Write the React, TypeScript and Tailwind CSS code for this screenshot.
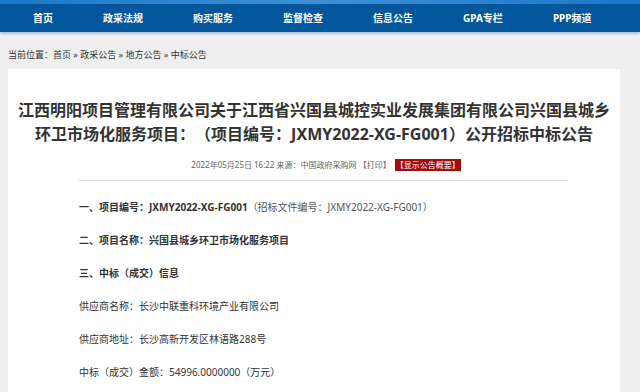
const navItems = ["首页", "政采法规", "购买服务", "监督检查", "信息公告", "GPA专栏", "PPP频道"];

const font = { fontFamily: '"Noto Sans", "Noto Sans CJK SC", sans-serif' };

export default function App() {
  return (
    <div className="h-[392px] overflow-hidden w-full bg-[#efefef] text-[#333] [text-spacing-trim:space-all]" style={font}>
      <div className="h-[4px] bg-gradient-to-r from-[#1a78c8] via-[#3b8fd6] to-[#1a78c8]" />
      <nav className="h-[28px] bg-[#02579c] shadow-[0_2px_2px_rgba(60,110,160,0.35)] flex items-center pl-[33px] gap-[50px]">
        {navItems.map((item) => (
          <span key={item} className="text-white text-[10px] font-bold leading-none whitespace-nowrap">
            {item}
          </span>
        ))}
      </nav>

      <div className="pl-[8px] pt-[17px] h-[37px] text-[9px] leading-[12px] text-[#333]">
        当前位置：首页 » 政采公告 » 地方公告 » 中标公告
      </div>

      <main className="ml-[8px] w-[612px] bg-white pt-[29px] pb-[20px]">
        <h1 className="text-center text-[16px] font-bold leading-[24px] text-[#333] whitespace-nowrap">
          江西明阳项目管理有限公司关于江西省兴国县城控实业发展集团有限公司兴国县城乡
          <br />
          环卫市场化服务项目：（项目编号：JXMY2022-XG-FG001）公开招标中标公告
        </h1>
        <div className="mt-[13px] flex justify-center items-center text-[8px] leading-[12px] text-[#666] pl-[24px]">
          <span>2022年05月25日 16:22 来源：中国政府采购网 【打印】</span>
          <span className="ml-[4px] bg-[#a30a0a] text-white px-[1px]">【显示公告概要】</span>
        </div>
        <div className="mt-[9px] ml-[71px] w-[489px] h-px bg-[#dcdcdc]" />

        <div className="mt-[10px] ml-[71px] text-[10px] leading-[33px] text-[#333]">
          <p>
            <span className="font-bold">一、项目编号：JXMY2022-XG-FG001</span>
            <span className="text-[#555]">（招标文件编号：JXMY2022-XG-FG001）</span>
          </p>
          <p className="font-bold">二、项目名称：兴国县城乡环卫市场化服务项目</p>
          <p className="font-bold">三、中标（成交）信息</p>
          <p>供应商名称：长沙中联重科环境产业有限公司</p>
          <p>供应商地址：长沙高新开发区林语路288号</p>
          <p>中标（成交）金额：54996.0000000（万元）</p>
        </div>
      </main>
    </div>
  );
}
